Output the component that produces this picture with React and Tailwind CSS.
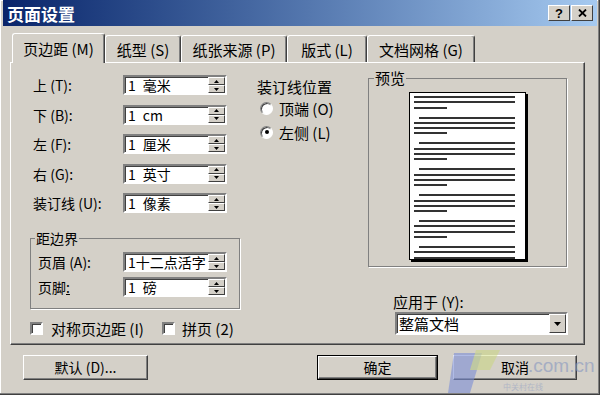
import React from 'react';

const tabs = [
  { t: '页边距', k: 'M', w: 'w-[93px]', on: true },
  { t: '纸型', k: 'S', w: 'w-[76px]' },
  { t: '纸张来源', k: 'P', w: 'w-[106px]' },
  { t: '版式', k: 'L', w: 'w-[80px]' },
  { t: '文档网格', k: 'G', w: 'w-[108px]' },
];

const margins = [
  { t: '上', k: 'T', u: '毫米' },
  { t: '下', k: 'B', u: 'cm' },
  { t: '左', k: 'F', u: '厘米' },
  { t: '右', k: 'G', u: '英寸' },
  { t: '装订线', k: 'U', u: '像素' },
];

// preview page: F = full line, I = indented, S = short
const paras = [
  'FFS', 'IFFS', 'IFFS', 'IFFS', 'IFFS', 'IFFS', 'IFF',
];

function Tri({ down }) {
  return (
    <svg width="5" height="3" viewBox="0 0 5 3">
      <path d={down ? 'M0 0h5L2.5 3z' : 'M0 3h5L2.5 0z'} fill="#000" />
    </svg>
  );
}

function Spin({ num, unit, tight }) {
  return (
    <div className="flex h-[20px] w-[104px] bg-white border-2 border-t-[#808080] border-l-[#808080] border-r-white border-b-white shadow-[inset_1px_1px_0_#404040]">
      <div className="flex flex-1 items-center whitespace-nowrap pl-[3px] text-[14px] leading-[16px]">
        <span>{num}</span>
        <span className={tight ? '' : 'ml-[7px]'}>{unit}</span>
      </div>
      <div className="flex w-[17px] flex-col">
        <div className="flex flex-1 items-center justify-center bg-[#d4d0c8] border border-t-white border-l-white border-r-[#404040] border-b-[#404040]">
          <Tri />
        </div>
        <div className="flex flex-1 items-center justify-center bg-[#d4d0c8] border border-t-white border-l-white border-r-[#404040] border-b-[#404040]">
          <Tri down />
        </div>
      </div>
    </div>
  );
}

function Radio({ checked }) {
  return (
    <span className="flex h-[13px] w-[13px] items-center justify-center rounded-full bg-white border border-t-[#808080] border-l-[#808080] border-r-white border-b-white shadow-[inset_1px_1px_0_#404040]">
      {checked && <span className="h-[4px] w-[4px] rounded-full bg-black" />}
    </span>
  );
}

function Check() {
  return (
    <span className="block h-[13px] w-[13px] bg-white border-2 border-t-[#808080] border-l-[#808080] border-r-white border-b-white shadow-[inset_1px_1px_0_#404040]" />
  );
}

function Button({ children, w, def }) {
  return (
    <div className={`${w} h-[25px] ${def ? 'border border-black' : ''}`}>
      <div className="flex h-full items-center justify-center border border-t-white border-l-white border-r-[#404040] border-b-[#404040] shadow-[inset_-1px_-1px_0_#808080] text-[14px]">
        {children}
      </div>
    </div>
  );
}

export default function App() {
  return (
    <div className="relative h-[395px] w-[600px] overflow-hidden bg-[#d4d0c8] px-[3px] font-['Noto_Sans_CJK_SC',sans-serif] text-black shadow-[inset_-1px_-1px_0_#404040,inset_-2px_-2px_0_#808080,inset_1px_1px_0_#fff]">

      {/* Title bar */}
      <div className="flex h-[26px] items-center bg-gradient-to-r from-[#0a246a] to-[#a6caf0] pl-[4px] pr-[4px]">
        <span className="text-[17px] font-bold leading-none text-white">页面设置</span>
        <div className="ml-auto flex gap-[1px]">
          <div className="flex h-[16px] w-[22px] items-center justify-center bg-[#d4d0c8] border border-t-white border-l-white border-r-[#404040] border-b-[#404040] font-['Liberation_Sans',sans-serif] text-[13px] font-bold leading-none">?</div>
          <div className="flex h-[16px] w-[22px] items-center justify-center bg-[#d4d0c8] border border-t-white border-l-white border-r-[#404040] border-b-[#404040]">
            <svg width="9" height="8" viewBox="0 0 9 8">
              <path d="M1 0.5L8 7.5M8 0.5L1 7.5" stroke="#000" strokeWidth="1.8" />
            </svg>
          </div>
        </div>
      </div>

      <div className="ml-[7px] w-[575px]">
        {/* Tabs */}
        <div className="mt-[7px] flex h-[29px] items-end pl-[2px]">
          {tabs.map((tab) => (
            <div
              key={tab.t}
              className={`${tab.w} ${tab.on ? 'relative z-10 -mb-px h-[30px]' : 'h-[27px]'} flex items-center justify-center rounded-t-[3px] bg-[#d4d0c8] border-l border-t border-r border-l-white border-t-white border-r-[#404040] shadow-[inset_-1px_0_0_#808080] text-[15px] leading-none`}
            >
              {tab.t} ({tab.k})
            </div>
          ))}
        </div>

        {/* Panel */}
        <div className="flex h-[283px] border border-t-white border-l-white border-r-[#404040] border-b-[#404040] shadow-[inset_-1px_-1px_0_#808080] pl-[19px] pr-[16px] pt-[7px]">

          {/* Left column */}
          <div className="w-[210px] pt-[5px]">
            <div className="flex flex-col gap-[9.5px] pl-[3px]">
              {margins.map((m) => (
                <div key={m.k} className="flex h-[20px] items-center">
                  <span className="w-[90px] text-[14px] leading-none">{m.t} ({m.k}):</span>
                  <Spin num="1" unit={m.u} />
                </div>
              ))}
            </div>

            <fieldset className="mt-[17px] border border-[#808080] px-0 pt-[6px] pb-[11px] shadow-[1px_1px_0_#fff]">
              <legend className="ml-[4px] px-[1px] text-[14px] leading-[16px]">距边界</legend>
              <div className="flex flex-col gap-[5px] pl-[7px]">
                <div className="flex h-[20px] items-center">
                  <span className="w-[85px] text-[14px] leading-none">页眉 (A):</span>
                  <Spin num="1" unit="十二点活字" tight />
                </div>
                <div className="flex h-[20px] items-center">
                  <span className="w-[85px] text-[14px] leading-none">页脚<u>:</u></span>
                  <Spin num="1" unit="磅" />
                </div>
              </div>
            </fieldset>

            <div className="mt-[12px] flex h-[14px] items-center">
              <div className="flex w-[132px] items-center">
                <Check />
                <span className="ml-[8px] text-[15px] leading-none">对称页边距 (I)</span>
              </div>
              <Check />
              <span className="ml-[7px] text-[15px] leading-none">拼页 (2)</span>
            </div>
          </div>

          {/* Gutter position */}
          <div className="ml-[17px] w-[111px] pt-[9px]">
            <div className="text-[15px] leading-[16px]">装订线位置</div>
            <div className="mt-[5px] flex h-[16px] items-center pl-[3px]">
              <Radio />
              <span className="ml-[6px] text-[15px] leading-none">顶端 (O)</span>
            </div>
            <div className="mt-[8px] flex h-[16px] items-center pl-[3px]">
              <Radio checked />
              <span className="ml-[6px] text-[15px] leading-none">左侧 (L)</span>
            </div>
          </div>

          {/* Preview + apply */}
          <div className="ml-auto w-[200px]">
            <fieldset className="h-[197px] w-[199px] border border-[#808080] px-0 pt-[6px] shadow-[1px_1px_0_#fff]">
              <legend className="ml-[5px] px-[1px] text-[15px] leading-[16px]">预览</legend>
              <div className="flex justify-center">
                <div className="flex h-[168px] w-[117px] flex-col gap-[8px] border border-black bg-white pt-[3px] shadow-[2px_2px_0_#000]">
                  {paras.map((p, i) => (
                    <div key={i} className="flex flex-col gap-[3.3px]">
                      {p.split('').map((c, j) => (
                        <div
                          key={j}
                          className={`h-[2px] bg-[#333] ${c === 'I' ? 'ml-[9px] w-[96px]' : c === 'S' ? 'ml-[4px] w-[33px]' : 'ml-[4px] w-[101px]'}`}
                        />
                      ))}
                    </div>
                  ))}
                </div>
              </div>
            </fieldset>

            <div className="mt-[27px] ml-[25px] text-[15px] leading-[16px]">应用于 (Y):</div>
            <div className="mt-[2px] ml-[27px] flex h-[23px] w-[173px] items-center bg-white border-2 border-t-[#808080] border-l-[#808080] border-r-white border-b-white shadow-[inset_1px_1px_0_#404040]">
              <span className="flex-1 pl-[2px] text-[15px] leading-none">整篇文档</span>
              <div className="flex h-[19px] w-[17px] items-center justify-center bg-[#d4d0c8] border border-t-white border-l-white border-r-[#404040] border-b-[#404040]">
                <svg width="7" height="4" viewBox="0 0 7 4"><path d="M0 0h7L3.5 4z" fill="#000" /></svg>
              </div>
            </div>
          </div>
        </div>

        {/* Buttons */}
        <div className="mt-[10px] flex">
          <div className="ml-[13px]">
            <Button w="w-[125px]">默认 (D)...</Button>
          </div>
          <div className="ml-auto mr-[8px] flex gap-[15px]">
            <Button w="w-[121px]" def>确定</Button>
            <Button w="w-[124px]">取消</Button>
          </div>
        </div>
      </div>

      {/* watermark */}
      <svg className="pointer-events-none absolute left-[440px] top-[340px] opacity-60" width="160" height="55" viewBox="0 0 160 55">
        <path d="M14 13L42 13L30 53L8 53z" fill="#7d8fd6" />
        <path d="M36 10L60 10L50 30L30 30z" fill="#c8d86a" opacity="0.7" />
        <text x="88" y="32" fontFamily="Liberation Sans, sans-serif" fontSize="19" fill="#8797c0">.com.cn</text>
        <text x="63" y="50" fontFamily="Noto Sans CJK SC, sans-serif" fontSize="8" fill="#9aa6c4">中关村在线</text>
      </svg>
    </div>
  );
}
